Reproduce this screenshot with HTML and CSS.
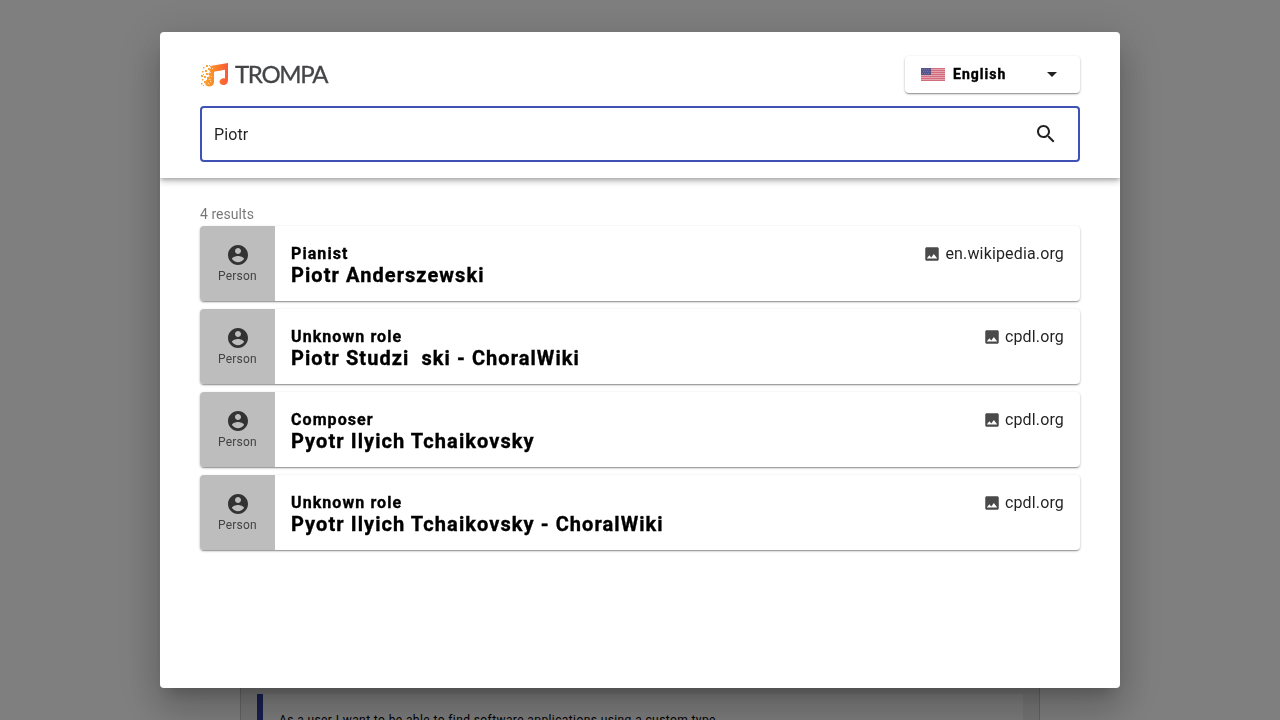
FILE: index.html
```html
<!DOCTYPE html>
<html lang="en">
<head>
<meta charset="utf-8">
<title>Trompa search</title>
<link rel="stylesheet" href="styles.css">
</head>
<body>
<svg class="defs" aria-hidden="true">
  <symbol id="person" viewBox="0 0 24 24"><path d="M12 2C6.48 2 2 6.48 2 12s4.48 10 10 10 10-4.480 10-10S17.520 2 12 2zm0 3c1.660 0 3 1.340 3 3s-1.340 3-3 3-3-1.340-3-3 1.340-3 3-3zm0 14.200c-2.500 0-4.710-1.280-6-3.220.03-1.990 4-3.080 6-3.080 1.990 0 5.970 1.090 6 3.080-1.290 1.940-3.500 3.220-6 3.220z"/></symbol>
  <symbol id="image" viewBox="0 0 24 24"><path d="M21 19V5c0-1.100-.9-2-2-2H5c-1.100 0-2 .9-2 2v14c0 1.100.9 2 2 2h14c1.100 0 2-.9 2-2zM8.500 13.500l2.500 3.010L14.500 12l4.500 6H5l3.500-4.500z"/></symbol>
</svg>
<div class="page">
  <div class="panel"><div class="quote">As a user I want to be able to find software applications using a custom type</div></div>
</div>
<div class="backdrop">
  <main class="dialog">
    <header class="header">
      <div class="topbar">
        <div class="logo">
          <svg class="logo-mark" width="30" height="26" viewBox="0 0 30 26">
            <defs><linearGradient id="flame" x1="0" x2="1"><stop offset="0" stop-color="#fba22f"/><stop offset=".45" stop-color="#fb8429"/><stop offset="1" stop-color="#f9583b"/></linearGradient></defs>
            <path fill="url(#flame)" d="M10 4 28 1V18c0 3-2 5-4.600 5-2.300 0-3.900-1.300-3.900-3.200 0-2.600 2.700-4.200 5.500-3.500V7.800L14 9.700V20c0 2.800-2.100 4.500-4.700 4.500C6.700 24.500 5 23 5 21c0-2 1.300-3.300 3.200-3.700L8 15l2-1-2-2 2-2-1-3 2-.5z"/>
            <g fill="#f9a33a"><path d="M6 3h2v2H6zM3 5h1.500v1.500H3zM8 6h2v2H8zM5 8h2v2H5zM2 9h1.500v1.500H2zM6 11h2v2H6zM1 13h2v2H1zM4 14h2v2H4zM7 15h3v3H7zM2 17h1.500v1.500H2zM4 19h2v2H4zM1 21h1.500v1.500H1zM9 3h1v1H9zM3 12h1v1H3zM3 23h1v1H3z"/></g>
            <path fill="#fff" opacity=".65" d="M10 10h1v1h-1zM12 6h1v1h-1zM9 17h1.500v1H9zM8 21h1v1H8zM11 14h1v1h-1zM10 19h1v1h-1z"/>
          </svg>
          <span class="logo-text">TROMPA</span>
        </div>
        <div class="language">
          <svg class="flag" width="24" height="13" viewBox="0 0 24 13">
            <path fill="#e4a3ad" d="M0 0h24v13H0z"/>
            <path stroke="#d06c7b" d="M0 .5h24M0 2.500h24M0 4.500h24M0 6.500h24M0 8.500h24M0 10.500h24M0 12.500h24"/>
            <path fill="#55548a" d="M0 0h10v7H0z"/>
            <path stroke="#77769f" stroke-dasharray="1 1" d="M1 1.500h8M2 3.500h8M1 5.500h8"/>
          </svg>
          <span class="language-name">English</span>
          <svg class="arrow" width="24" height="24" viewBox="0 0 24 24"><path d="M7 10l5 5 5-5z"/></svg>
        </div>
      </div>
      <div class="search">
        <span>Piotr</span>
        <svg width="24" height="24" viewBox="0 0 24 24"><path d="M15.500 14h-.79l-.28-.27C15.410 12.590 16 11.110 16 9.500 16 5.910 13.090 3 9.500 3S3 5.910 3 9.500 5.910 16 9.500 16c1.610 0 3.090-.59 4.230-1.570l.27.28v.79l5 4.990L20.490 19l-4.990-5zm-6 0C7.010 14 5 11.990 5 9.500S7.010 5 9.500 5 14 7.010 14 9.500 11.990 14 9.500 14z"/></svg>
      </div>
    </header>
    <section class="results">
      <div class="count">4 results</div>
      <article class="card">
        <div class="kind"><svg class="person"><use href="#person"/></svg><span>Person</span></div>
        <div class="info"><div class="role">Pianist</div><div class="name">Piotr Anderszewski</div></div>
        <div class="source"><svg class="image"><use href="#image"/></svg><span>en.wikipedia.org</span></div>
      </article>
      <article class="card">
        <div class="kind"><svg class="person"><use href="#person"/></svg><span>Person</span></div>
        <div class="info"><div class="role">Unknown role</div><div class="name">Piotr Studzi<span class="gap"></span>ski - ChoralWiki</div></div>
        <div class="source"><svg class="image"><use href="#image"/></svg><span>cpdl.org</span></div>
      </article>
      <article class="card">
        <div class="kind"><svg class="person"><use href="#person"/></svg><span>Person</span></div>
        <div class="info"><div class="role">Composer</div><div class="name">Pyotr Ilyich Tchaikovsky</div></div>
        <div class="source"><svg class="image"><use href="#image"/></svg><span>cpdl.org</span></div>
      </article>
      <article class="card">
        <div class="kind"><svg class="person"><use href="#person"/></svg><span>Person</span></div>
        <div class="info"><div class="role">Unknown role</div><div class="name">Pyotr Ilyich Tchaikovsky - ChoralWiki</div></div>
        <div class="source"><svg class="image"><use href="#image"/></svg><span>cpdl.org</span></div>
      </article>
    </section>
  </main>
</div>
</body>
</html>
```
FILE: styles.css
```css
* { box-sizing: border-box; }
body { margin: 0; height: 720px; overflow: hidden; background: #fff; font-family: Roboto, sans-serif; color: rgba(0,0,0,.87); }
svg { display: block; flex: none; fill: currentColor; }
.defs { position: absolute; width: 0; height: 0; }
.page { height: 720px; overflow: hidden; padding: 600px 240px 0; }
.panel { height: 140px; padding: 93px 16px 0; border: 1px solid #c8c8c8; background: #ececec; }
.quote { height: 60px; border-left: 6px solid #303f9f; background: #fafafa; padding: 16px; font-size: 12px; line-height: 20px; letter-spacing: .4px; color: #000; }
.backdrop { position: fixed; inset: 0; background: rgba(0,0,0,.5); padding: 32px 160px; }
.dialog { height: 656px; background: #fff; border-radius: 4px; overflow: hidden; box-shadow: 0 11px 15px -7px rgba(0,0,0,.2), 0 24px 38px 3px rgba(0,0,0,.14), 0 9px 46px 8px rgba(0,0,0,.12); }
.header { height: 146px; padding: 24px 40px 0; box-shadow: 0 2px 4px -1px rgba(0,0,0,.2), 0 4px 5px rgba(0,0,0,.14), 0 1px 10px rgba(0,0,0,.12); }
.topbar { display: flex; justify-content: space-between; height: 50px; }
.logo { display: flex; height: 37px; align-items: center; }
.logo-text { font: 400 24px/30px Lato, sans-serif; letter-spacing: -1.3px; color: #444548; margin: -2px 0 0 5px; -webkit-text-stroke: .3px #444548; }
.language, .card { border-radius: 4px; background: #fff; box-shadow: 0 2px 1px -1px rgba(0,0,0,.2), 0 1px 2px rgba(0,0,0,.22), 0 1px 3px rgba(0,0,0,.12); }
.language { display: flex; align-items: center; width: 175px; height: 37px; padding: 0 16px 1px; }
.language-name { margin-left: 8px; font-size: 14px; font-weight: 700; letter-spacing: 1.02px; color: #000; -webkit-text-stroke: .4px #000; }
.arrow { margin-left: auto; }
.search { display: flex; align-items: center; justify-content: space-between; height: 56px; padding: 0 20px 0 12px; border: 2px solid #3f51b5; border-radius: 4px; font-size: 16px; letter-spacing: .1px; }
.results { padding: 27px 40px 0; }
.count { height: 21px; font-size: 14px; line-height: 19px; color: rgba(0,0,0,.54); letter-spacing: .05px; }
.card { display: flex; height: 75px; overflow: hidden; margin-bottom: 8px; }
.kind { width: 75px; padding-top: 17px; background: #bdbdbd; display: flex; flex-direction: column; align-items: center; font-size: 12px; line-height: 18px; letter-spacing: .2px; color: #424242; }
.person { width: 24px; height: 24px; color: #333; }
.info { flex: 1; padding: 17px 16px 0; color: #000; font-weight: 700; -webkit-text-stroke: .35px #000; }
.role { font-size: 16px; line-height: 21px; letter-spacing: 1.08px; }
.name { font-size: 20px; line-height: 23px; letter-spacing: 1.07px; white-space: nowrap; }
.gap { display: inline-block; width: 12px; }
.source { display: flex; height: 23px; margin: 16px 16px 0 0; align-items: center; font-size: 16px; letter-spacing: .15px; }
.image { width: 18px; height: 18px; margin: 1px 4px 0 0; color: #4a4a4a; }
```
